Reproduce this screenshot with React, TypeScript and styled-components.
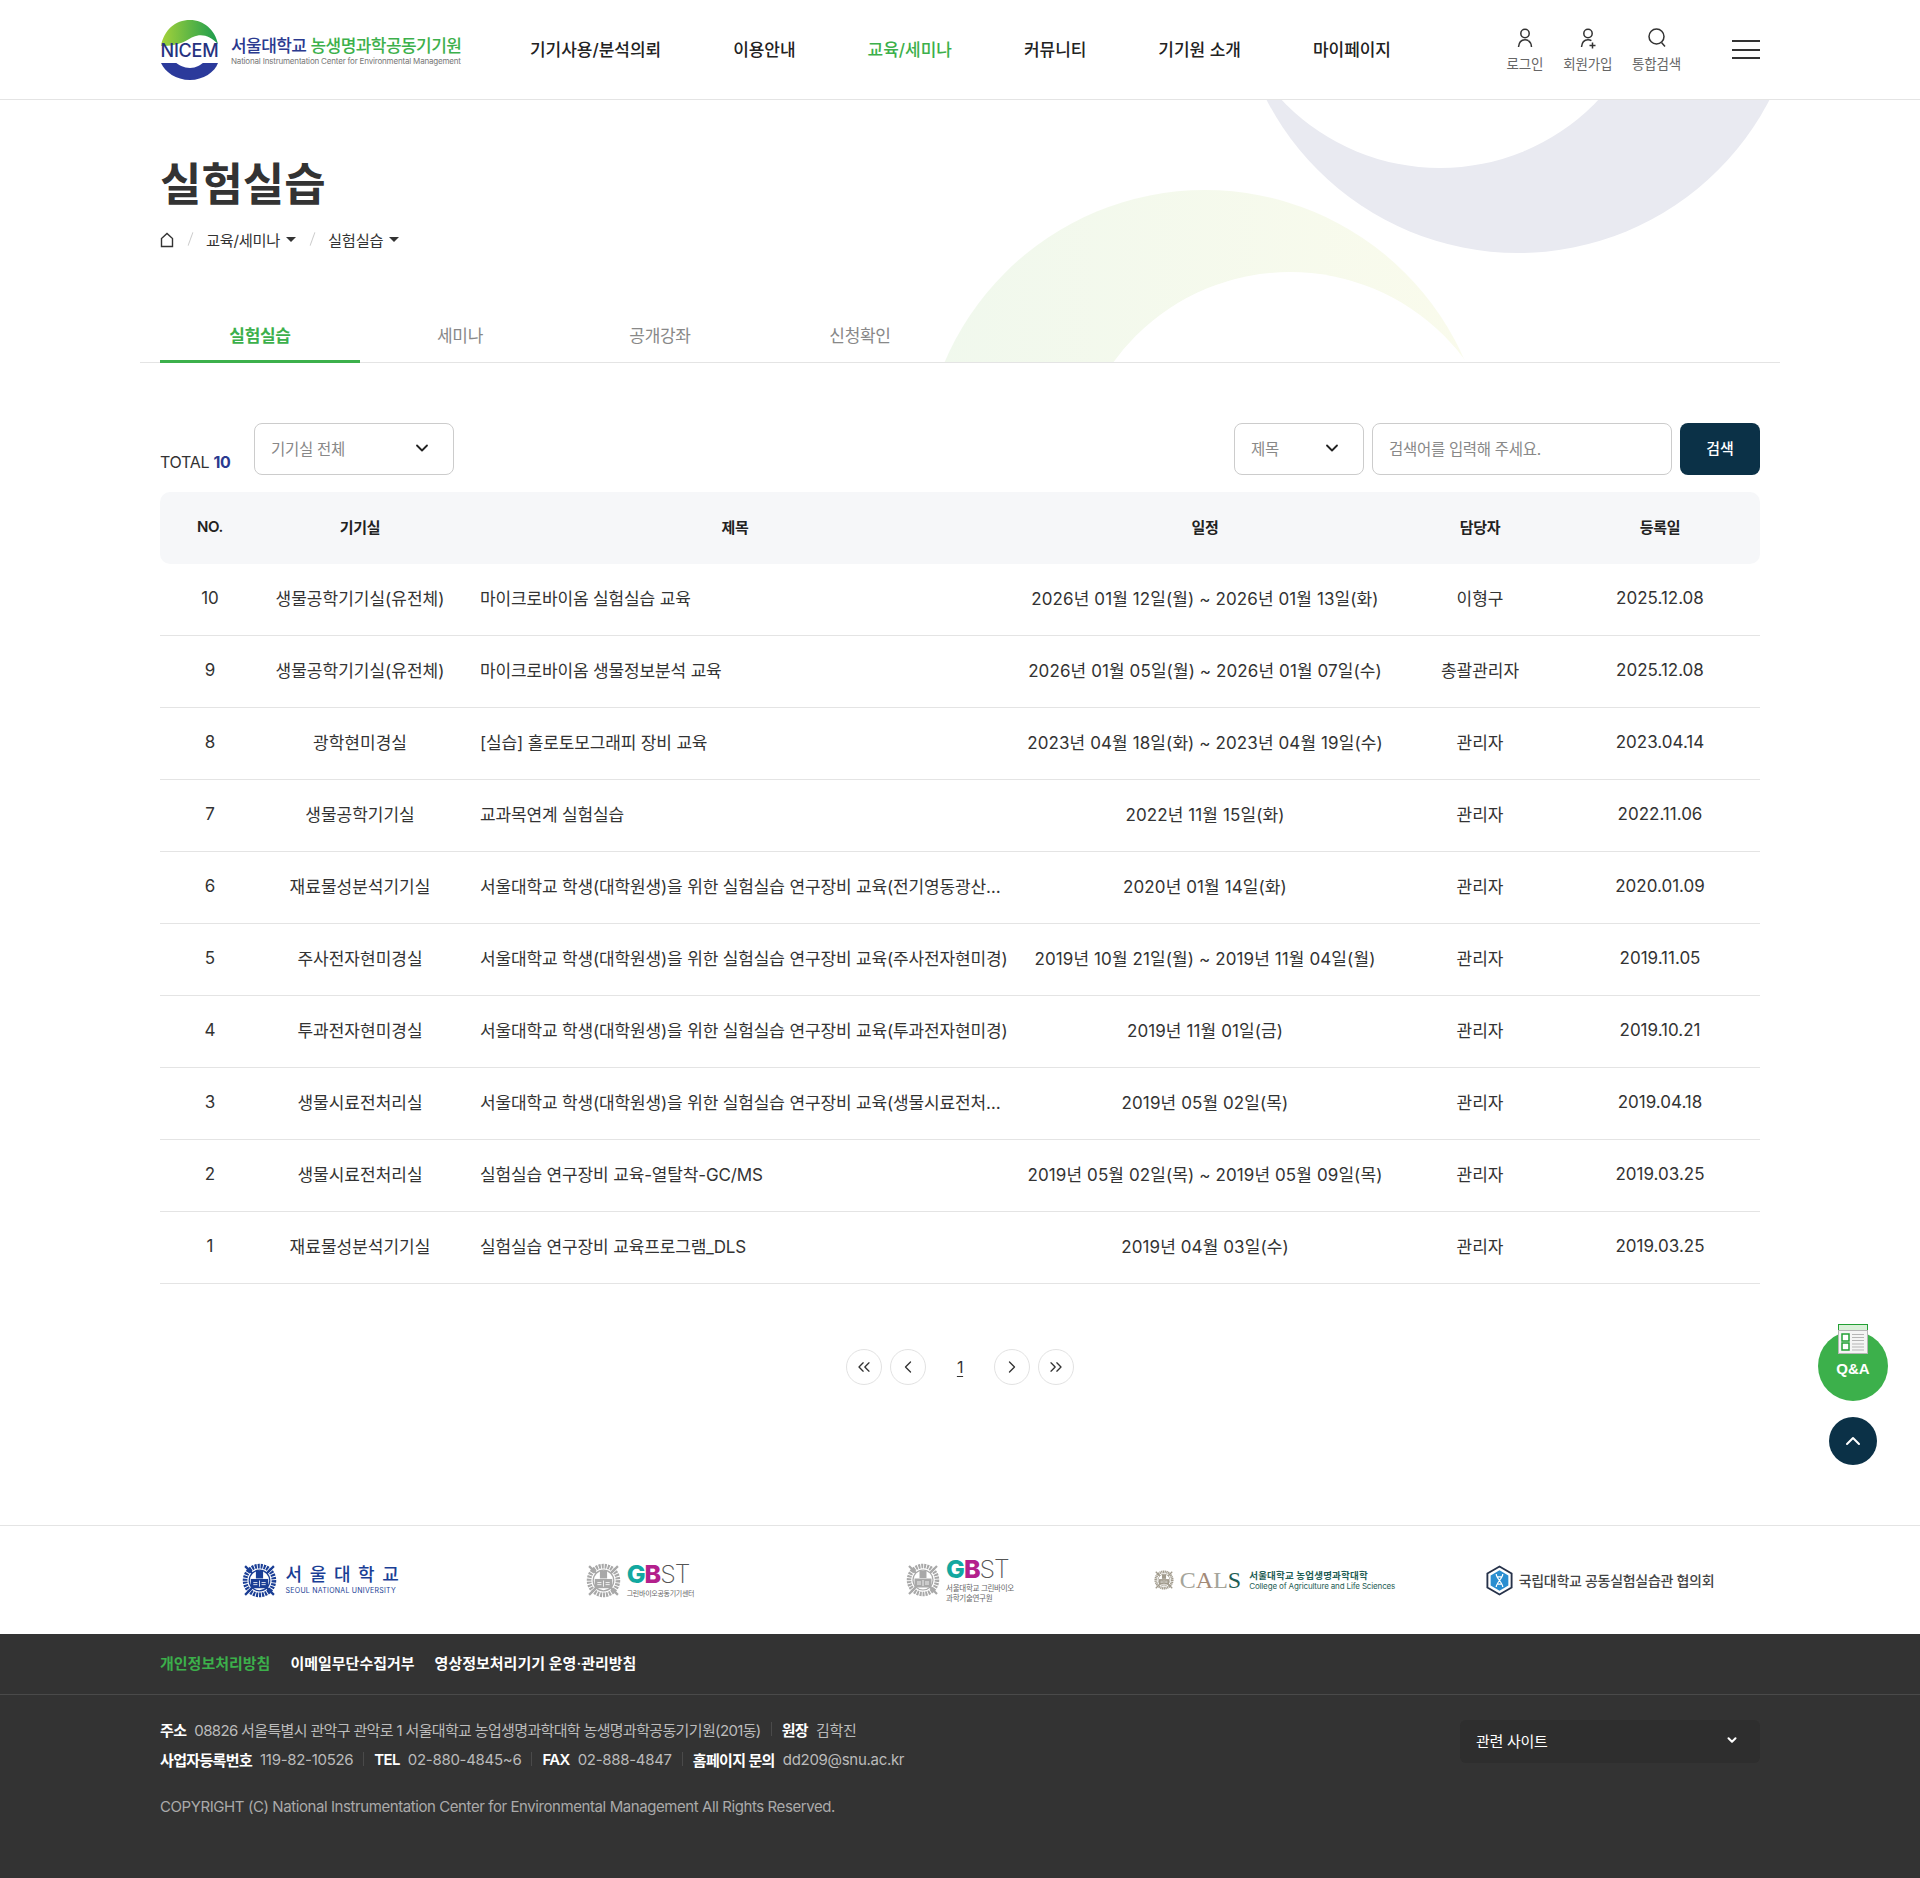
import React from "react";
import styled, { createGlobalStyle } from "styled-components";
import { ChevronDown, ChevronLeft, ChevronRight, ChevronUp, ChevronsLeft, ChevronsRight } from "lucide-react";

const GREEN = "#3cb04b";
const NAVY = "#2b3a8f";
const DARK = "#0b3147";

const rows = [
  { no: 10, room: "생물공학기기실(유전체)", title: "마이크로바이옴 실험실습 교육", date: "2026년 01월 12일(월) ~ 2026년 01월 13일(화)", manager: "이형구", created: "2025.12.08" },
  { no: 9, room: "생물공학기기실(유전체)", title: "마이크로바이옴 생물정보분석 교육", date: "2026년 01월 05일(월) ~ 2026년 01월 07일(수)", manager: "총괄관리자", created: "2025.12.08" },
  { no: 8, room: "광학현미경실", title: "[실습] 홀로토모그래피 장비 교육", date: "2023년 04월 18일(화) ~ 2023년 04월 19일(수)", manager: "관리자", created: "2023.04.14" },
  { no: 7, room: "생물공학기기실", title: "교과목연계 실험실습", date: "2022년 11월 15일(화)", manager: "관리자", created: "2022.11.06" },
  { no: 6, room: "재료물성분석기기실", title: "서울대학교 학생(대학원생)을 위한 실험실습 연구장비 교육(전기영동광산란분석기)", date: "2020년 01월 14일(화)", manager: "관리자", created: "2020.01.09" },
  { no: 5, room: "주사전자현미경실", title: "서울대학교 학생(대학원생)을 위한 실험실습 연구장비 교육(주사전자현미경)", date: "2019년 10월 21일(월) ~ 2019년 11월 04일(월)", manager: "관리자", created: "2019.11.05" },
  { no: 4, room: "투과전자현미경실", title: "서울대학교 학생(대학원생)을 위한 실험실습 연구장비 교육(투과전자현미경)", date: "2019년 11월 01일(금)", manager: "관리자", created: "2019.10.21" },
  { no: 3, room: "생물시료전처리실", title: "서울대학교 학생(대학원생)을 위한 실험실습 연구장비 교육(생물시료전처리장비)", date: "2019년 05월 02일(목)", manager: "관리자", created: "2019.04.18" },
  { no: 2, room: "생물시료전처리실", title: "실험실습 연구장비 교육-열탈착-GC/MS", date: "2019년 05월 02일(목) ~ 2019년 05월 09일(목)", manager: "관리자", created: "2019.03.25" },
  { no: 1, room: "재료물성분석기기실", title: "실험실습 연구장비 교육프로그램_DLS", date: "2019년 04월 03일(수)", manager: "관리자", created: "2019.03.25" },
];

const GlobalStyle = createGlobalStyle`
  * { box-sizing: border-box; }
  html, body { margin: 0; padding: 0; background: #fff; }
  body {
    font-family: Inter, "Noto Sans CJK KR", sans-serif;
    color: #333;
    letter-spacing: -0.3px;
  }
`;

const Page = styled.div`
  position: relative;
  width: 1920px;
  height: 1878px;
  overflow: hidden;
  display: flex;
  flex-direction: column;
`;

const Header = styled.header`
  height: 100px;
  padding: 0 160px;
  display: flex;
  align-items: center;
  border-bottom: 1px solid #e4e4e4;
  background: #fff;
`;

const Brand = styled.div`
  display: flex;
  align-items: center;
  gap: 11px;
  width: 370px;
`;

const BrandText = styled.div`
  display: flex;
  flex-direction: column;
  gap: -1px;
  padding-top: 2px;
`;

const BrandName = styled.div`
  font-size: 17px;
  line-height: 22px;
  font-weight: 500;
  letter-spacing: -0.55px;
  white-space: nowrap;
  margin-bottom: -1px;
  color: ${NAVY};
  span { color: ${GREEN}; margin-left: 4px; }
`;

const BrandSub = styled.div`
  font-size: 8px;
  line-height: 10px;
  color: #777;
  letter-spacing: -0.18px;
  white-space: nowrap;
`;

const Nav = styled.nav`
  display: flex;
  gap: 72px;
`;

const NavItem = styled.a<{ $active?: boolean }>`
  font-size: 17px;
  font-weight: 500;
  line-height: 24px;
  letter-spacing: -0.03px;
  white-space: nowrap;
  color: ${(p) => (p.$active ? GREEN : "#222")};
`;

const Utils = styled.div`
  margin-left: auto;
  display: flex;
  align-items: center;
`;

const UtilItem = styled.a`
  display: flex;
  flex-direction: column;
  align-items: center;
  font-size: 13.5px;
  line-height: 18px;
  letter-spacing: -0.2px;
  color: #666;
  margin-right: 20px;
  svg { display: block; margin-bottom: 5px; }
`;

const Burger = styled.div`
  margin-left: 31px;
  width: 28px;
  height: 19px;
  display: flex;
  flex-direction: column;
  justify-content: space-between;
  span { display: block; height: 2px; background: #333; }
`;

const Hero = styled.section`
  position: relative;
  height: 199px;
  padding: 0 160px;
`;

const HeroArt = styled.svg`
  position: absolute;
  left: 0;
  top: 0;
`;

const Title = styled.h1`
  position: relative;
  margin: 0;
  padding-top: 54px;
  font-size: 45px;
  line-height: 62px;
  font-weight: 700;
  letter-spacing: 0;
  color: #333;
`;

const Crumbs = styled.div`
  position: relative;
  margin-top: 13px;
  display: flex;
  align-items: center;
  height: 20px;
  font-size: 15.3px;
  color: #333;
  svg { margin-top: 2px; }
`;

const Slash = styled.i`
  width: 1px;
  height: 14px;
  margin: 0 15px 0 16px;
  background: #ccc;
  transform: rotate(20deg);
`;

const Caret = styled.i`
  width: 0;
  height: 0;
  margin-left: 6px;
  border-left: 5px solid transparent;
  border-right: 5px solid transparent;
  border-top: 5px solid #333;
`;

const Tabs = styled.div`
  position: relative;
  margin: -2px 140px 0;
  padding: 0 20px;
  display: flex;
  height: 66px;
  border-bottom: 1px solid #e4e4e4;
`;

const Tab = styled.a<{ $active?: boolean }>`
  width: 200px;
  height: 66px;
  display: flex;
  align-items: center;
  justify-content: center;
  padding-top: 12px;
  font-size: 17px;
  font-weight: ${(p) => (p.$active ? 600 : 400)};
  color: ${(p) => (p.$active ? GREEN : "#888")};
  border-bottom: 3px solid ${(p) => (p.$active ? GREEN : "transparent")};
`;

const Content = styled.main`
  padding: 60px 160px 0;
  flex: 1;
`;

const Toolbar = styled.div`
  display: flex;
  gap: 8px;
  height: 52px;
  margin-bottom: 17px;
`;

const Total = styled.div`
  align-self: flex-end;
  width: 86px;
  padding-bottom: 2px;
  font-size: 16px;
  line-height: 22px;
  color: #333;
  white-space: nowrap;
  b { color: ${NAVY}; font-weight: 700; }
`;

const SelectBox = styled.div<{ $width: number }>`
  width: ${(p) => p.$width}px;
  height: 52px;
  padding: 0 21px 2px 16px;
  display: flex;
  align-items: center;
  justify-content: space-between;
  border: 1px solid #ccc;
  border-radius: 8px;
  font-size: 15.5px;
  color: #888;
  svg { color: #222; }
`;

const Spacer = styled.div`
  flex: 1;
`;

const SearchInput = styled.div`
  width: 300px;
  height: 52px;
  padding: 0 16px 2px;
  display: flex;
  align-items: center;
  border: 1px solid #ccc;
  border-radius: 8px;
  font-size: 15.5px;
  color: #888;
`;

const SearchButton = styled.button`
  width: 80px;
  height: 52px;
  padding: 0 0 3px;
  border: 0;
  border-radius: 8px;
  background: ${DARK};
  color: #fff;
  font: 500 15px Inter, "Noto Sans CJK KR", sans-serif;
`;

const Table = styled.table`
  width: 1600px;
  table-layout: fixed;
  border-collapse: separate;
  border-spacing: 0;
`;

const Th = styled.th<{ $width: number }>`
  width: ${(p) => p.$width}px;
  height: 72px;
  padding: 0 0 4px;
  background: #f6f7f9;
  font-size: 15px;
  font-weight: 600;
  color: #222;
  &:first-child { border-radius: 10px 0 0 10px; }
  &:last-child { border-radius: 0 10px 10px 0; }
`;

const Td = styled.td`
  height: 72px;
  padding: 0 0 4px;
  text-align: center;
  font-size: 17px;
  letter-spacing: 0;
  color: #333;
  border-bottom: 1px solid #e4e4e4;
  white-space: nowrap;
`;

const TitleCell = styled(Td)`
  padding-left: 20px;
  text-align: left;
  letter-spacing: -0.15px;
  overflow: hidden;
  text-overflow: ellipsis;
`;

const DateCell = styled(Td)`
  letter-spacing: 0.1px;
`;

const Pager = styled.div`
  margin-top: 65px;
  display: flex;
  justify-content: center;
  gap: 8px;
`;

const PageCircle = styled.a`
  width: 36px;
  height: 36px;
  display: flex;
  align-items: center;
  justify-content: center;
  border: 1px solid #e2e2e2;
  border-radius: 50%;
  color: #333;
`;

const PageNumber = styled.a`
  width: 52px;
  height: 36px;
  display: flex;
  align-items: center;
  justify-content: center;
  font-size: 16px;
  color: #333;
  text-decoration: underline;
  text-underline-offset: 3px;
`;

const QnaButton = styled.a`
  position: absolute;
  left: 1818px;
  top: 1331px;
  width: 70px;
  height: 70px;
  display: flex;
  align-items: center;
  justify-content: center;
  padding-top: 5px;
  border-radius: 50%;
  background: ${GREEN};
  color: #fff;
  font: 700 15px "Liberation Sans", Arial, sans-serif;
  letter-spacing: 0;
  svg { position: absolute; left: 20px; top: -7px; }
`;

const TopButton = styled.a`
  position: absolute;
  left: 1829px;
  top: 1417px;
  width: 48px;
  height: 48px;
  display: flex;
  align-items: center;
  justify-content: center;
  border-radius: 50%;
  background: ${DARK};
  color: #fff;
`;

const LogoStrip = styled.div`
  height: 109px;
  padding: 0 160px;
  display: grid;
  grid-template-columns: repeat(5, 320px);
  align-items: center;
  justify-items: center;
  border-top: 1px solid #e4e4e4;
`;

const LogoItem = styled.div<{ $offset?: number }>`
  display: flex;
  align-items: center;
  gap: 6px;
  margin-left: ${(p) => p.$offset ?? 0}px;
`;

const SnuText = styled.div`
  color: #1a3e95;
  margin-left: 3px;
  margin-right: -8px;
  strong {
    display: block;
    font-size: 18px;
    line-height: 22px;
    font-weight: 500;
    letter-spacing: 7.6px;
    white-space: nowrap;
  }
  small {
    display: block;
    font-size: 7px;
    line-height: 10px;
    letter-spacing: 0.25px;
    white-space: nowrap;
  }
`;

const GbstMark = styled.div<{ $size: number }>`
  font-size: ${(p) => p.$size}px;
  line-height: 26px;
  letter-spacing: -1px;
  font-weight: 800;
  white-space: nowrap;
  i { font-style: normal; color: #12a8a0; }
  u { text-decoration: none; color: #b3208c; }
  em { font-style: normal; font-weight: 200; color: #555; }
`;

const GbstSub = styled.div<{ $size: number }>`
  margin-top: 2px;
  font-size: ${(p) => p.$size}px;
  line-height: 10px;
  color: #666;
  white-space: nowrap;
  letter-spacing: -0.3px;
`;

const CalsMark = styled.div`
  font: 400 24px "Liberation Serif", serif;
  letter-spacing: 0;
  color: #a5a59b;
  white-space: nowrap;
  b { font-weight: 400; color: #a38a78; }
  u { text-decoration: none; color: #1f5e55; }
`;

const CalsText = styled.div`
  margin-left: 2px;
  color: #1f5e55;
  white-space: nowrap;
  strong { display: block; font-size: 9.5px; line-height: 11px; font-weight: 700; letter-spacing: 0.2px; }
  small { display: block; font-size: 8px; line-height: 10px; letter-spacing: -0.15px; }
`;

const CouncilText = styled.div`
  font-size: 14px;
  font-weight: 500;
  color: #444;
  white-space: nowrap;
  letter-spacing: -0.3px;
`;

const Footer = styled.footer`
  height: 244px;
  background: #333;
  color: #bbb;
`;

const FooterLinks = styled.div`
  height: 61px;
  padding: 0 160px 3px;
  display: flex;
  align-items: center;
  gap: 20px;
  border-bottom: 1px solid #4a4a4a;
`;

const FooterLink = styled.a<{ $accent?: boolean }>`
  font-size: 15px;
  font-weight: 600;
  letter-spacing: 0;
  color: ${(p) => (p.$accent ? GREEN : "#fff")};
`;

const FooterBody = styled.div`
  padding: 19px 160px 0;
  display: flex;
  justify-content: space-between;
  align-items: flex-start;
`;

const InfoRow = styled.div`
  height: 30px;
  display: flex;
  align-items: center;
  font-size: 15px;
  white-space: nowrap;
`;

const InfoPart = styled.span<{ $tight?: boolean }>`
  display: inline-flex;
  align-items: center;
  letter-spacing: ${(p) => (p.$tight ? "-0.65px" : "-0.3px")};
  &:not(:first-child)::before {
    content: "";
    width: 1px;
    height: 14px;
    margin: 0 10px;
    background: #4a4a4a;
  }
  b { color: #fff; font-weight: 600; margin-right: 8px; letter-spacing: -0.65px; }
`;

const Copyright = styled.div`
  margin-top: 23px;
  font-size: 15px;
  line-height: 20px;
  letter-spacing: -0.42px;
  color: #aaa;
`;

const SiteSelect = styled.div`
  width: 300px;
  height: 43px;
  margin-top: 6px;
  padding: 0 21px 3px 16px;
  display: flex;
  align-items: center;
  justify-content: space-between;
  background: #2e2e2e;
  border-radius: 6px;
  font-size: 15px;
  color: #fff;
`;

function NicemLogo() {
  return (
    <svg width="60" height="60" viewBox="0 0 60 60">
      <defs>
        <linearGradient id="nicem" x1="0" x2="1" y1="0" y2="0">
          <stop offset="0" stopColor="#a5d23a" />
          <stop offset="1" stopColor="#1c9c4e" />
        </linearGradient>
      </defs>
      <path d="M1 26C4 10 15 0 30 0c14 0 25 10 28 24-8-8-16-11-25-7-7 3-12 9-32 9z" fill="url(#nicem)" />
      <path d="M1 43h57C55 52 43 60 30 60 16 60 5 52 1 43z" fill="#2b3a9b" />
      <path d="M14 41h31c-4 4-9 7-15 7s-12-3-16-7z" fill="#fff" />
      <text x="29.5" y="36.5" textAnchor="middle" fontSize="18" fontWeight="500" fill="#26327f" fontFamily="Inter, sans-serif" letterSpacing="-0.2">NICEM</text>
    </svg>
  );
}

function Emblem({ size, color }: { size: number; color: string }) {
  return (
    <svg width={size} height={size} viewBox="0 0 34 34" fill="none" stroke={color}>
      <path d="M3 3l28 28M31 3L3 31" strokeWidth="2.2" />
      <circle cx="17" cy="17" r="14" strokeWidth="4.500" strokeDasharray="2 0.9" />
      <circle cx="17" cy="17" r="10" fill="#fff" strokeWidth="1.200" />
      <path d="M13.500 7.500h7v7.500h-7z" fill={color} stroke="none" />
      <path d="M8.500 15.500h17v9h-17z" fill={color} stroke="none" />
      <path d="M17 17v6M11 19h4M19 19h4M11 21h4M19 21h4" stroke="#fff" strokeWidth="0.8" />
    </svg>
  );
}

function PersonIcon({ plus }: { plus?: boolean }) {
  return (
    <svg width="24" height="24" viewBox="0 0 24 24" fill="none" stroke="#333" strokeWidth="1.5">
      <circle cx="12" cy="7.5" r="4.2" />
      <path d="M5.5 21c.4-4.6 2.9-7.3 6.5-7.3 1.300 0 2.400.3 3.400 1" />
      {plus ? <path d="M16.500 16.500v6M13.500 19.500h6" /> : <path d="M15.400 14.700c1.900 1.300 2.900 3.300 3.100 6.300" />}
    </svg>
  );
}

function SearchIcon() {
  return (
    <svg width="24" height="24" viewBox="0 0 24 24" fill="none" stroke="#333" strokeWidth="1.5">
      <circle cx="11.500" cy="10.500" r="7.500" />
      <path d="M16.500 16.500l3.500 4" />
    </svg>
  );
}

function HomeIcon() {
  return (
    <svg width="14" height="16" viewBox="0 0 14 16" fill="none" stroke="#333" strokeWidth="1.400">
      <path d="M1.500 14.500V6.500L7 1.500l5.500 5v8z" />
    </svg>
  );
}

function QnaIcon() {
  return (
    <svg width="30" height="30" viewBox="0 0 30 30">
      <rect x="0" y="0" width="30" height="30" fill="#fff" />
      <rect x="0.500" y="0.500" width="29" height="6" fill="#d9f0d8" stroke="#22a034" />
      <rect x="0.500" y="6.500" width="29" height="23" fill="#f4f4f4" stroke="#b5b5b5" />
      <rect x="4" y="10" width="7" height="7" fill="#fff" stroke="#22a034" strokeWidth="1.500" />
      <rect x="4" y="19" width="7" height="7" fill="#fff" stroke="#22a034" strokeWidth="1.500" />
      <path d="M14 10.500h12M14 13.500h12M14 16.500h12M14 20h12M14 23h12M14 26h12" stroke="#b5b5b5" />
    </svg>
  );
}

function CouncilIcon() {
  return (
    <svg width="27" height="31" viewBox="0 0 29 32">
      <path d="M14.500 1L27.500 8.500v15L14.500 31 1.500 23.500v-15z" fill="#fff" stroke="#26324a" strokeWidth="2" />
      <path d="M14.500 5L24 10.500v11L14.500 27 5 21.500v-11z" fill="#2a8ed0" />
      <path d="M11 9c0 5 7 9 7 14M18 9c0 5-7 9-7 14M12 12h5M12 20h5" fill="none" stroke="#fff" strokeWidth="1.300" />
    </svg>
  );
}

export default function App() {
  return (
    <Page>
      <GlobalStyle />
      <Header>
        <Brand>
          <NicemLogo />
          <BrandText>
            <BrandName>서울대학교<span>농생명과학공동기기원</span></BrandName>
            <BrandSub>National Instrumentation Center for Environmental Management</BrandSub>
          </BrandText>
        </Brand>
        <Nav>
          <NavItem>기기사용/분석의뢰</NavItem>
          <NavItem>이용안내</NavItem>
          <NavItem $active>교육/세미나</NavItem>
          <NavItem>커뮤니티</NavItem>
          <NavItem>기기원 소개</NavItem>
          <NavItem>마이페이지</NavItem>
        </Nav>
        <Utils>
          <UtilItem><PersonIcon />로그인</UtilItem>
          <UtilItem><PersonIcon plus />회원가입</UtilItem>
          <UtilItem><SearchIcon />통합검색</UtilItem>
          <Burger><span /><span /><span /></Burger>
        </Utils>
      </Header>

      <Hero>
        <HeroArt width="1920" height="263" viewBox="0 100 1920 263">
          <defs>
            <linearGradient id="soft" x1="0" x2="1" y1="0" y2="0">
              <stop offset="0" stopColor="#f0f8ed" />
              <stop offset="1" stopColor="#fafbec" />
            </linearGradient>
          </defs>
          <circle cx="1205" cy="473" r="283" fill="url(#soft)" />
          <circle cx="1290" cy="490" r="218" fill="#fff" />
          <circle cx="1518" cy="-30" r="283" fill="#e9eaf1" />
          <circle cx="1440" cy="-50" r="218" fill="#fff" />
        </HeroArt>
        <Title>실험실습</Title>
        <Crumbs>
          <HomeIcon />
          <Slash />
          교육/세미나<Caret />
          <Slash />
          실험실습<Caret />
        </Crumbs>
      </Hero>

      <Tabs>
        <Tab $active>실험실습</Tab>
        <Tab>세미나</Tab>
        <Tab>공개강좌</Tab>
        <Tab>신청확인</Tab>
      </Tabs>

      <Content>
        <Toolbar>
          <Total>TOTAL <b>10</b></Total>
          <SelectBox $width={200}>기기실 전체<ChevronDown size={20} strokeWidth={2.2} /></SelectBox>
          <Spacer />
          <SelectBox $width={130}>제목<ChevronDown size={20} strokeWidth={2.2} /></SelectBox>
          <SearchInput>검색어를 입력해 주세요.</SearchInput>
          <SearchButton>검색</SearchButton>
        </Toolbar>
        <Table>
          <thead>
            <tr>
              <Th $width={100}>NO.</Th>
              <Th $width={200}>기기실</Th>
              <Th $width={550}>제목</Th>
              <Th $width={390}>일정</Th>
              <Th $width={160}>담당자</Th>
              <Th $width={200}>등록일</Th>
            </tr>
          </thead>
          <tbody>
            {rows.map((r) => (
              <tr key={r.no}>
                <Td>{r.no}</Td>
                <Td>{r.room}</Td>
                <TitleCell>{r.title}</TitleCell>
                <DateCell>{r.date}</DateCell>
                <Td>{r.manager}</Td>
                <Td>{r.created}</Td>
              </tr>
            ))}
          </tbody>
        </Table>
        <Pager>
          <PageCircle><ChevronsLeft size={20} strokeWidth={1.6} /></PageCircle>
          <PageCircle><ChevronLeft size={20} strokeWidth={1.6} /></PageCircle>
          <PageNumber>1</PageNumber>
          <PageCircle><ChevronRight size={20} strokeWidth={1.6} /></PageCircle>
          <PageCircle><ChevronsRight size={20} strokeWidth={1.6} /></PageCircle>
        </Pager>
      </Content>

      <QnaButton><QnaIcon />Q&amp;A</QnaButton>
      <TopButton><ChevronUp size={24} strokeWidth={2} /></TopButton>

      <LogoStrip>
        <LogoItem>
          <Emblem size={35} color="#1a3e95" />
          <SnuText><strong>서울대학교</strong><small>SEOUL NATIONAL UNIVERSITY</small></SnuText>
        </LogoItem>
        <LogoItem>
          <Emblem size={35} color="#a8a8a8" />
          <div>
            <GbstMark $size={25}><i>G</i><u>B</u><em>ST</em></GbstMark>
            <GbstSub $size={7}>그린바이오공동기기센터</GbstSub>
          </div>
        </LogoItem>
        <LogoItem>
          <Emblem size={34} color="#a8a8a8" />
          <div>
            <GbstMark $size={25}><i>G</i><u>B</u><em>ST</em></GbstMark>
            <GbstSub $size={7.5}>서울대학교 그린바이오<br />과학기술연구원</GbstSub>
          </div>
        </LogoItem>
        <LogoItem $offset={-11}>
          <Emblem size={20} color="#a09a8c" />
          <CalsMark>C<b>A</b>L<u>S</u></CalsMark>
          <CalsText><strong>서울대학교 농업생명과학대학</strong><small>College of Agriculture and Life Sciences</small></CalsText>
        </LogoItem>
        <LogoItem>
          <CouncilIcon />
          <CouncilText>국립대학교 공동실험실습관 협의회</CouncilText>
        </LogoItem>
      </LogoStrip>

      <Footer>
        <FooterLinks>
          <FooterLink $accent>개인정보처리방침</FooterLink>
          <FooterLink>이메일무단수집거부</FooterLink>
          <FooterLink>영상정보처리기기 운영·관리방침</FooterLink>
        </FooterLinks>
        <FooterBody>
          <div>
            <InfoRow>
              <InfoPart $tight><b>주소</b>08826 서울특별시 관악구 관악로 1 서울대학교 농업생명과학대학 농생명과학공동기기원(201동)</InfoPart>
              <InfoPart><b>원장</b>김학진</InfoPart>
            </InfoRow>
            <InfoRow>
              <InfoPart><b>사업자등록번호</b>119-82-10526</InfoPart>
              <InfoPart><b>TEL</b>02-880-4845~6</InfoPart>
              <InfoPart><b>FAX</b>02-888-4847</InfoPart>
              <InfoPart><b>홈페이지 문의</b>dd209@snu.ac.kr</InfoPart>
            </InfoRow>
            <Copyright>COPYRIGHT (C) National Instrumentation Center for Environmental Management All Rights Reserved.</Copyright>
          </div>
          <SiteSelect>관련 사이트<ChevronDown size={14} strokeWidth={3.5} /></SiteSelect>
        </FooterBody>
      </Footer>
    </Page>
  );
}
